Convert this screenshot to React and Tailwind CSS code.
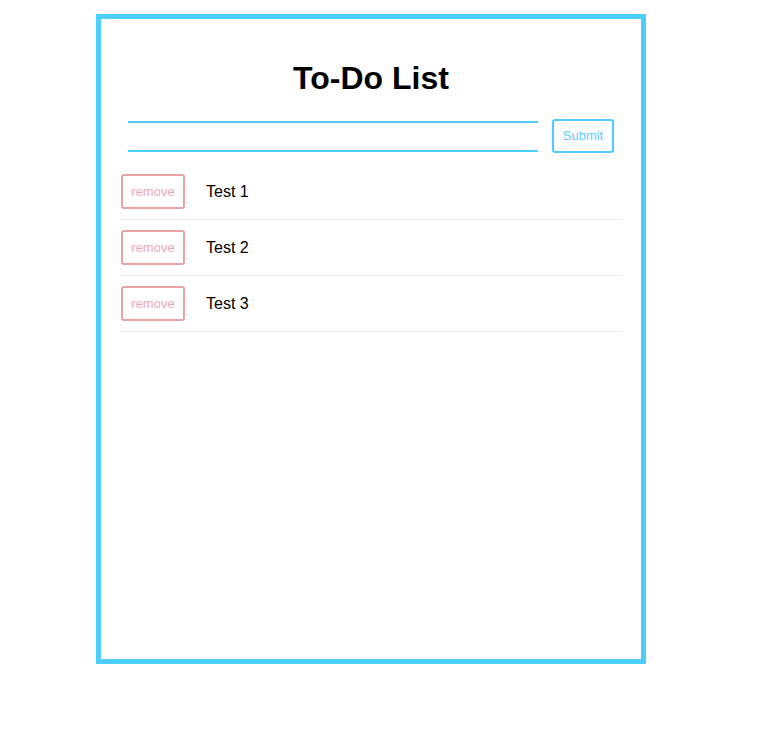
import React from "react";

const items = ["Test 1", "Test 2", "Test 3"];

export default function App() {
  return (
    <div className="min-h-[755px] bg-white pt-[14px] pl-[96px]" style={{ fontFamily: '"Liberation Sans", Arial, sans-serif' }}>
      <div className="box-border flex h-[650px] w-[550px] flex-col border-[5px] border-[#4ccffc] bg-white">
        <h1 className="mt-[41px] text-center text-[32px] font-bold leading-[37px] text-black">To-Do List</h1>
        <form className="mt-[22px] flex items-center gap-[14px] px-[27px]" onSubmit={(e) => e.preventDefault()}>
          <input
            type="text"
            className="box-border h-[31px] w-[410px] border-y-2 border-[#4ccffc] bg-transparent text-[16px] outline-none"
          />
          <button
            type="submit"
            className="box-border h-[34px] w-[62px] rounded-[3px] border-2 border-[#4ccffc] bg-white text-[13px] text-[#5ccffa]"
          >
            Submit
          </button>
        </form>
        <ul className="mt-[11px] px-[20px]">
          {items.map((t) => (
            <li key={t} className="flex items-center border-b border-[#eeeeee] py-[10px]">
              <button className="box-border h-[35px] w-[64px] rounded-[3px] border-2 border-[#e8a3a8] bg-white text-[13px] text-[#f0a6b6]">
                remove
              </button>
              <span className="ml-[21px] text-[16px] text-black">{t}</span>
            </li>
          ))}
        </ul>
      </div>
    </div>
  );
}
